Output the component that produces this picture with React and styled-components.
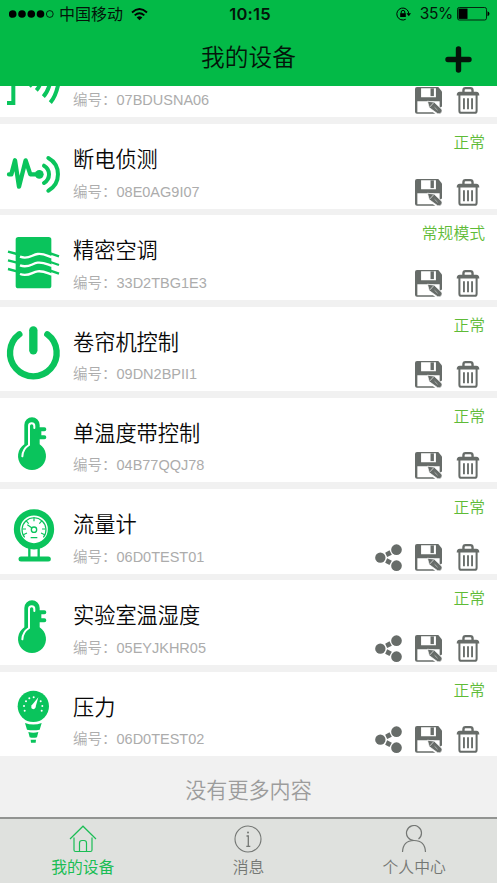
import React from "react";
import styled, { createGlobalStyle } from "styled-components";

const GlobalStyle = createGlobalStyle`
  * {
    box-sizing: border-box;
  }

  body {
    margin: 0;
    background-color: #f1f1f1;
    font-family: "Liberation Sans", "Noto Sans CJK SC", sans-serif;
  }
`;

const AppStyle = styled.div`
  display: flex;
  flex-direction: column;
  width: 497px;
  height: 883px;
  overflow: hidden;
  background-color: #f1f1f1;
`;

const HeaderStyle = styled.header`
  flex: none;
  height: 86px;
  background-color: #03ba47;
  color: #04150a;
`;

const StatusBar = styled.div`
  display: grid;
  grid-template-columns: 1fr auto 1fr;
  align-items: center;
  height: 28px;
  padding: 0 7px 0 9px;
  font-size: 16px;
  line-height: 28px;

  svg {
    display: block;
  }
`;

const StatusGroup = styled.div`
  display: flex;
  align-items: center;
  justify-content: ${(props) => (props.$right ? "flex-end" : "flex-start")};
`;

const Carrier = styled.span`
  margin: -2px 8px 0 5px;
  font-family: "Noto Sans CJK SC", sans-serif;
`;

const Clock = styled.span`
  margin-left: 1px;
  font-family: Inter, sans-serif;
  font-size: 16.5px;
  font-weight: 600;
  letter-spacing: 0.2px;
`;

const Percent = styled.span`
  margin: 0 4px 0 9px;
  font-family: Inter, sans-serif;
  font-size: 15.5px;
  letter-spacing: -0.3px;
`;

const TitleBar = styled.div`
  display: grid;
  grid-template-columns: 1fr auto 1fr;
  align-items: start;
  height: 58px;
  padding-right: 25px;
  padding-left: 25px;

  h1 {
    grid-column: 2;
    margin: 0;
    font-family: "Noto Sans CJK SC", sans-serif;
    font-size: 23.7px;
    font-weight: 350;
    line-height: 56px;
  }

  svg {
    display: block;
    justify-self: end;
    margin-top: 18px;
  }
`;

const ListView = styled.main`
  flex: none;
  height: 730.5px;
  overflow: hidden;
`;

const ListContent = styled.div`
  margin-top: -53.3px;
`;

const Row = styled.section`
  display: flex;
  height: 84.6px;
  margin-bottom: 6.7px;
  padding: 0 12px 0 7px;
  background-color: #ffffff;
`;

const DeviceIcon = styled.svg`
  flex: none;
  width: 53px;
  height: 53px;
  margin: 19.5px 13px 0 0;
  overflow: visible;
  color: #0ac45c;
`;

const Info = styled.div`
  flex: 1;
  padding-top: 19px;

  h2 {
    height: 30px;
    margin: 0;
    color: #080808;
    font-family: "Noto Sans CJK SC", sans-serif;
    font-size: 21.2px;
    font-weight: 350;
    line-height: 30px;
  }

  p {
    margin: 8.6px 0 0;
    color: #acacac;
    font-family: "Liberation Sans", "Noto Sans CJK SC", sans-serif;
    font-size: 14.5px;
    font-weight: 350;
    line-height: 21px;
  }
`;

const Side = styled.div`
  display: flex;
  flex-direction: column;
  align-items: flex-end;
  padding-top: 8px;
`;

const State = styled.span`
  color: #5ebb37;
  font-family: "Noto Sans CJK SC", sans-serif;
  font-size: 15.8px;
  font-weight: 350;
  line-height: 20px;
`;

const Actions = styled.div`
  display: flex;
  gap: 13px;
  margin-top: auto;
  padding: 0 4px 3px 0;
  color: #676c69;

  svg {
    display: block;
    height: 27px;
  }
`;

const NoMore = styled.p`
  margin: 0;
  color: #9c9c9c;
  font-family: "Noto Sans CJK SC", sans-serif;
  font-size: 21.1px;
  font-weight: 350;
  line-height: 52px;
  text-align: center;
`;

const TabBar = styled.nav`
  display: grid;
  flex: 1;
  grid-template-columns: repeat(3, 1fr);
  border-top: 2.5px solid #929492;
  background-color: #dfe1de;
`;

const Tab = styled.div`
  display: flex;
  flex-direction: column;
  align-items: center;
  padding-top: 6px;
  color: ${(props) => (props.$active ? "#1bbd55" : "#747774")};
  font-family: "Noto Sans CJK SC", sans-serif;
  font-size: 15.8px;
  font-weight: ${(props) => (props.$active ? 400 : 350)};
  line-height: 24px;

  svg {
    display: block;
    margin-bottom: 2px;
  }
`;

const shapes = {
  signal: (
    <g fill="none" stroke="currentColor" strokeWidth="12">
      <path d="M0 96H19V153H0" />
      <path d="M67 103L75 94" />
      <path d="M88 115Q97 106 101 90" />
      <path d="M109 134Q123 119 130 90" />
      <path d="M130 152Q148 131 155 90" />
    </g>
  ),
  outage: (
    <g
      fill="none"
      stroke="currentColor"
      strokeWidth="13"
      strokeLinecap="round"
      strokeLinejoin="round"
    >
      <path d="M6 94H13L24 52 36 131 56 52 70 94H88" />
      <circle cx="97" cy="94" r="13" fill="currentColor" stroke="none" />
      <path d="M111 68A30 30 0 0 1 111 120" strokeWidth="12" />
      <path d="M124 45A56 56 0 0 1 124 143" strokeWidth="12" />
    </g>
  ),
  cooling: (
    <g fill="none" strokeWidth="7">
      <rect x="26" y="6" width="107" height="154" rx="8" fill="currentColor" />
      {[0, 26, 52].map((y) => (
        <g key={y} transform={`translate(0 ${y})`}>
          <path d="M3 50L30 57M130 55L156 64" stroke="currentColor" />
          <path d="M39 65C64 75 75 59 92 57S118 61 135 67" stroke="#fff" />
        </g>
      ))}
    </g>
  ),
  power: (
    <g fill="none" stroke="currentColor" strokeLinecap="round">
      <path d="M37 25A70 70 0 1 0 121 25" strokeWidth="19" />
      <path d="M79 13V73" strokeWidth="25" />
    </g>
  ),
  thermometer: (
    <g fill="currentColor">
      <path d="M52 24a23 23 0 0 1 46 0V82a42 42 0 1 1-46 0z" />
      <path d="M94 31h18a6 6 0 0 1 0 12h-9v12h9a6 6 0 0 1 0 12h-18z" />
      <path
        d="M82 33V27a8 8 0 0 0-16 0V84Q47 96 46 118"
        fill="none"
        stroke="#fff"
        strokeWidth="6"
        strokeLinecap="round"
      />
    </g>
  ),
  flow: (
    <g fill="none" stroke="currentColor">
      <circle cx="81" cy="61" r="51" strokeWidth="19" />
      <path d="M53 85A36 36 0 1 1 109 85" strokeWidth="3.500" />
      <path
        d="M81 25V37M57 35L65 44M105 35L97 44M46 60H57M105 60H116M49 77L60 72M113 77L102 72M61 47L75 57M71 86H91"
        strokeWidth="3.500"
      />
      <circle cx="81" cy="62" r="8" strokeWidth="4" />
      <path d="M67 117V144M95 117V144" strokeWidth="7" />
      <path d="M42 150H124" strokeWidth="15" strokeLinecap="round" />
    </g>
  ),
  pressure: (
    <g fill="currentColor">
      <circle cx="79" cy="46" r="47" />
      <path d="M54 96Q79 105 104 96L98 116Q79 120 60 116zM64 123Q79 127 94 123L90 139Q79 142 68 139zM71 146H87L86 155H72z" />
      <g fill="#fff">
        {[
          [53, 59],
          [51, 45],
          [57, 31],
          [67, 22],
          [80, 19],
          [101, 31],
          [106, 45],
          [104, 59],
        ].map(([x, y]) => (
          <circle key={`${x}-${y}`} cx={x} cy={y} r="3" />
        ))}
        <path d="M73 44L94 19L85 50z" />
        <circle cx="79" cy="48" r="6.500" />
      </g>
    </g>
  ),
};

const ShareIcon = () => (
  <svg width="27" viewBox="0 0 80 81" fill="currentColor">
    <circle cx="15.500" cy="41" r="15.500" />
    <circle cx="64" cy="17" r="16" />
    <circle cx="64" cy="65" r="16" />
    <path d="M30 26L43 19 50 32 36 39zM36 43L50 50 43 63 30 56z" />
  </svg>
);

const SaveIcon = () => (
  <svg width="27" viewBox="0 0 80 80">
    <path
      d="M6 0H69L80 13V74L75 79H6Q0 79 0 73V6Q0 0 6 0z"
      fill="currentColor"
    />
    <path d="M18 4H62V30H18zM7 42H73V75H7z" fill="#fff" />
    <path d="M46 4H56V27H46z" fill="currentColor" />
    <path d="M52 73L60 80H80V58z" fill="#fff" />
    <path
      d="M37 42L57 45 79 66Q82 71 78 76T67 79L42 61z"
      fill="currentColor"
      stroke="#fff"
      strokeWidth="2"
    />
    <path d="M55 47L44 59" stroke="#fff" strokeWidth="2" />
    <path d="M58 60L67 69" stroke="#b9bcba" strokeWidth="2.500" />
  </svg>
);

const TrashIcon = () => (
  <svg width="26" viewBox="0 0 77 80" fill="none" stroke="currentColor">
    <path d="M25 16V10Q25 3.500 31 3.500H45Q52 3.500 52 10V16" strokeWidth="7" />
    <path d="M5 25Q5 14 14 14H63Q72 14 72 25z" fill="currentColor" stroke="none" />
    <path d="M13 22V70Q13 76.500 19 76.500H58Q64 76.500 64 70V22" strokeWidth="6" />
    <path d="M26.500 33V66M38.500 33V66M50.500 33V66" strokeWidth="5.500" />
  </svg>
);

const devices = [
  { code: "07BDUSNA06", icon: "signal" },
  { name: "断电侦测", code: "08E0AG9I07", state: "正常", icon: "outage" },
  { name: "精密空调", code: "33D2TBG1E3", state: "常规模式", icon: "cooling" },
  { name: "卷帘机控制", code: "09DN2BPII1", state: "正常", icon: "power" },
  { name: "单温度带控制", code: "04B77QQJ78", state: "正常", icon: "thermometer" },
  { name: "流量计", code: "06D0TEST01", state: "正常", icon: "flow", share: true },
  { name: "实验室温湿度", code: "05EYJKHR05", state: "正常", icon: "thermometer", share: true },
  { name: "压力", code: "06D0TEST02", state: "正常", icon: "pressure", share: true },
];

function Header() {
  return (
    <HeaderStyle>
      <StatusBar>
        <StatusGroup>
          <svg width="45" height="10" viewBox="0 0 45 10">
            <g fill="#000">
              <circle cx="3.700" cy="5" r="3.800" />
              <circle cx="13" cy="5" r="3.800" />
              <circle cx="22.300" cy="5" r="3.800" />
              <circle cx="31.500" cy="5" r="3.800" />
            </g>
            <circle cx="40.800" cy="5" r="3.400" fill="none" stroke="#000" strokeWidth="0.800" />
          </svg>
          <Carrier>中国移动</Carrier>
          <svg width="17" height="13" viewBox="0 0 17 13" fill="none" stroke="#000" strokeWidth="1.900">
            <path d="M1 4.500Q8.500-2.300 16 4.500M3.700 7.400Q8.500 3.200 13.300 7.400" />
            <path d="M5.700 9.400Q8.500 7 11.300 9.400L8.500 12.200z" fill="#000" stroke="none" />
          </svg>
        </StatusGroup>
        <Clock>10:15</Clock>
        <StatusGroup $right>
          <svg width="15" height="14" viewBox="0 0 15 14" fill="none" stroke="#000">
            <path d="M9.700 12.300A6 6 0 1 1 12.800 6.500" />
            <path d="M10.500 6.200H15L12.800 9.200z" fill="#000" stroke="none" />
            <path d="M4.200 6.200H9.800V10H4.200z" fill="#000" stroke="none" />
            <path d="M5.200 6.500V5Q5.200 3.400 7 3.400T8.800 5V6.500" />
          </svg>
          <Percent>35%</Percent>
          <svg width="33" height="14" viewBox="0 0 33 14">
            <rect x="0.500" y="0.500" width="29" height="12.500" rx="1.800" fill="none" stroke="#04250f" />
            <rect x="1.500" y="1.600" width="9" height="10.300" fill="#000" />
            <path d="M30.500 4.300Q32.500 5 32.500 6.800T30.500 9.300z" fill="#000" />
          </svg>
        </StatusGroup>
      </StatusBar>
      <TitleBar>
        <h1>我的设备</h1>
        <svg width="27" height="27" viewBox="0 0 27 27">
          <path
            d="M13.500 3V24M3 13.500H24"
            stroke="#04150a"
            strokeWidth="5.400"
            strokeLinecap="round"
          />
        </svg>
      </TitleBar>
    </HeaderStyle>
  );
}

function DeviceRow({ device }) {
  return (
    <Row>
      <DeviceIcon viewBox="0 0 159 159">{shapes[device.icon]}</DeviceIcon>
      <Info>
        <h2>{device.name}</h2>
        <p>编号：{device.code}</p>
      </Info>
      <Side>
        {device.state && <State>{device.state}</State>}
        <Actions>
          {device.share && <ShareIcon />}
          <SaveIcon />
          <TrashIcon />
        </Actions>
      </Side>
    </Row>
  );
}

function Footer() {
  return (
    <TabBar>
      <Tab $active>
        <svg width="28" height="28" viewBox="0 0 28 28" fill="none" stroke="currentColor" strokeWidth="1.200">
          <path d="M1 14L14 1.200 27 14M5 12.500V25Q5 26.500 6.500 26.500H21.500Q23 26.500 23 25V12.500" />
          <path d="M10.500 26.500V18Q10.500 15.500 13 15.500H15Q17.500 15.500 17.500 18V26.500" />
        </svg>
        我的设备
      </Tab>
      <Tab>
        <svg width="28" height="28" viewBox="0 0 28 28" fill="none" stroke="currentColor" strokeWidth="1.100">
          <circle cx="14" cy="14" r="13" />
          <path d="M12.500 11H14.300V21M12.300 21.300H16.300" strokeWidth="1.300" />
          <circle cx="14" cy="7.500" r="1" fill="currentColor" stroke="none" />
        </svg>
        消息
      </Tab>
      <Tab>
        <svg width="28" height="28" viewBox="0 0 28 28" fill="none" stroke="currentColor" strokeWidth="1.200">
          <path d="M18.500 14A7.500 7.500 0 1 0 14 15.500" />
          <path d="M2.500 27Q3 15.500 14 15.500T25.500 27" />
        </svg>
        个人中心
      </Tab>
    </TabBar>
  );
}

export default function App() {
  return (
    <>
      <GlobalStyle />
      <AppStyle>
        <Header />
        <ListView>
          <ListContent>
            {devices.map((device) => (
              <DeviceRow key={device.code} device={device} />
            ))}
            <NoMore>没有更多内容</NoMore>
          </ListContent>
        </ListView>
        <Footer />
      </AppStyle>
    </>
  );
}
